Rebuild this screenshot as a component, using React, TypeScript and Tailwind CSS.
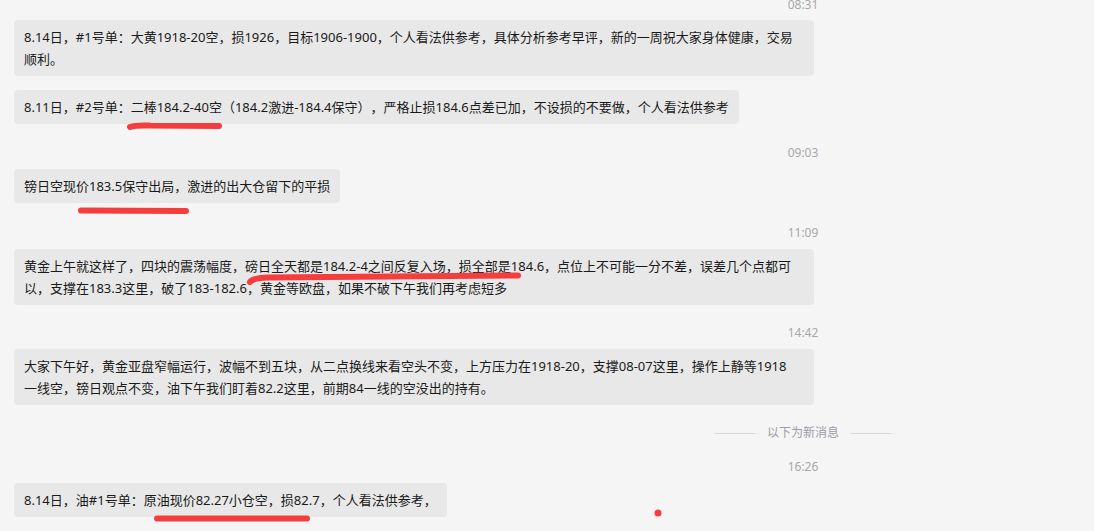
import React from 'react';

const font = "font-['Microsoft_YaHei','Noto_Sans','Noto_Sans_CJK_SC',sans-serif]";

function Time({ t, className = '' }: { t: string; className?: string }) {
    return (
        <div className={`h-[16px] text-center text-[12px] leading-[16px] text-[#a8a8a8] ${className}`}>{t}</div>
    );
}

function Bubble({ children, className = '' }: { children: React.ReactNode; className?: string }) {
    return (
        <div className={`self-start max-w-[800px] rounded-[4px] bg-[#e8e8e8] px-[10px] py-[6px] text-[13px] leading-[22px] text-[#1a1a1a] [text-spacing-trim:space-all] ${className}`}>
            {children}
        </div>
    );
}

export default function App() {
    return (
        <div className={`relative w-[1094px] h-[531px] overflow-hidden bg-[#f5f5f5] ${font}`}>
            <div className="flex w-[1606px] flex-col px-[14px] -mt-[3px]">
                <Time t="08:31" />
                <Bubble className="mt-[7px] w-[800px]">
                    8.14日，#1号单：大黄1918-20空，损1926，目标1906-1900，个人看法供参考，具体分析参考早评，新的一周祝大家身体健康，交易<br />顺利。
                </Bubble>
                <Bubble className="mt-[14px]">
                    8.11日，#2号单：二棒184.2-40空（184.2激进-184.4保守），严格止损184.6点差已加，不设损的不要做，个人看法供参考
                </Bubble>

                <Time t="09:03" className="mt-[21px]" />
                <Bubble className="mt-[8px]">镑日空现价183.5保守出局，激进的出大仓留下的平损</Bubble>

                <Time t="11:09" className="mt-[22px]" />
                <Bubble className="mt-[8px] w-[800px]">
                    黄金上午就这样了，四块的震荡幅度，磅日全天都是184.2-4之间反复入场，损全部是184.6，点位上不可能一分不差，误差几个点都可<br />以，支撑在183.3这里，破了183-182.6，黄金等欧盘，如果不破下午我们再考虑短多
                </Bubble>

                <Time t="14:42" className="mt-[20px]" />
                <Bubble className="mt-[8px] w-[800px]">
                    大家下午好，黄金亚盘窄幅运行，波幅不到五块，从二点换线来看空头不变，上方压力在1918-20，支撑08-07这里，操作上静等1918<br />一线空，镑日观点不变，油下午我们盯着82.2这里，前期84一线的空没出的持有。
                </Bubble>

                <div className="mt-[20px] flex h-[16px] items-center justify-center gap-[12px] text-[12px] leading-[16px] text-[#9a9ea6]">
                    <div className="h-px w-[40px] bg-[#d6d6d6]" />
                    <span>以下为新消息</span>
                    <div className="h-px w-[40px] bg-[#d6d6d6]" />
                </div>

                <Time t="16:26" className="mt-[18px]" />
                <Bubble className="mt-[8px]">8.14日，油#1号单：原油现价82.27小仓空，损82.7，个人看法供参考，</Bubble>
            </div>

            {/* hand-drawn red marks */}
            <svg className="pointer-events-none absolute inset-0" width="1094" height="531" viewBox="0 0 1094 531">
                <g stroke="#f53d3d" strokeWidth="6" strokeLinecap="round" fill="none">
                    <path d="M130 127 Q135 125 150 125.5 L219 126" />
                    <path d="M81 210.5 L186 211" />
                    <path d="M250 282 Q253 278 268 277.5 L518 275.5" />
                    <path d="M157 518.5 L307 518.5" />
                </g>
                <circle cx="658" cy="513" r="3.5" fill="#f53d3d" />
            </svg>
        </div>
    );
}
